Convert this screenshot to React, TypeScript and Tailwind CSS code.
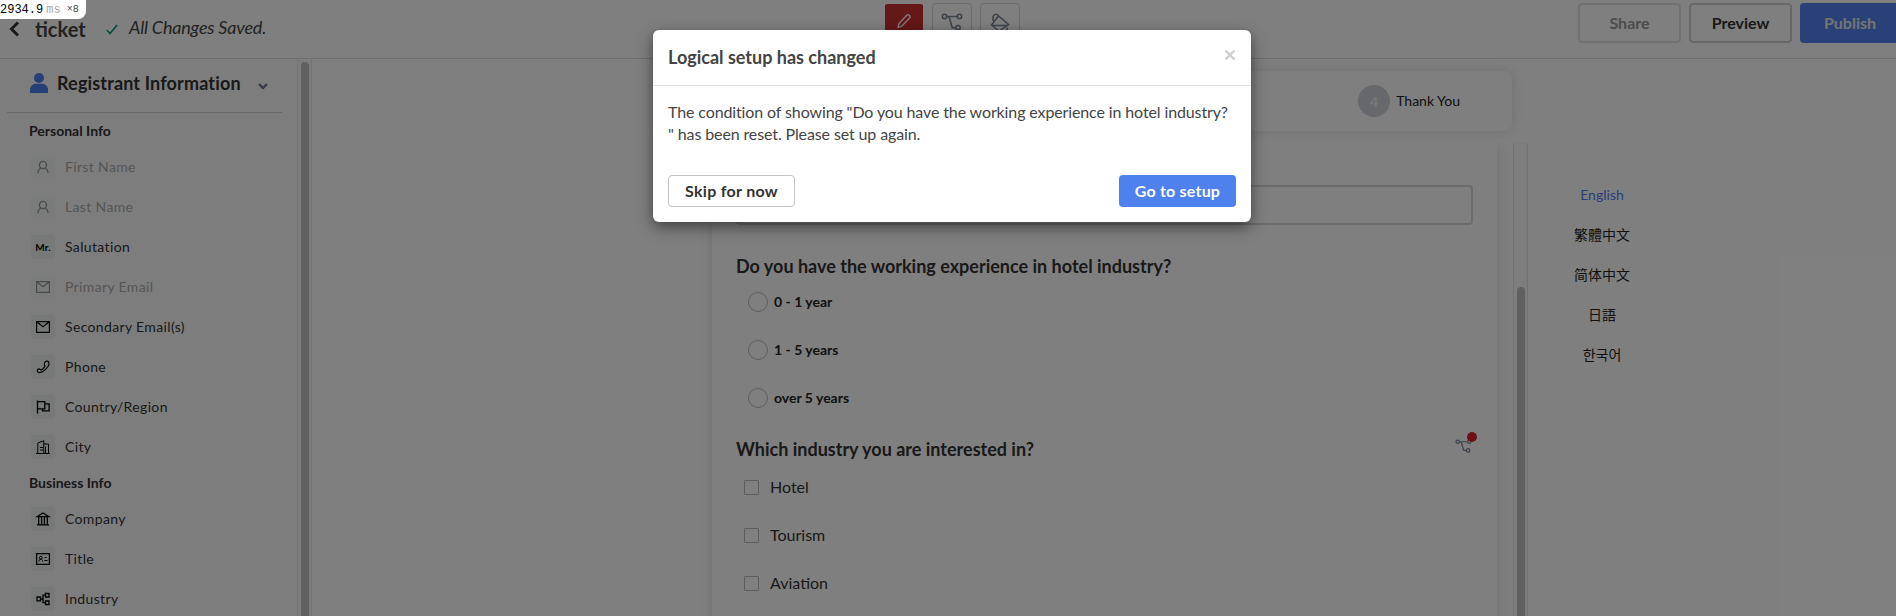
import type { ReactNode } from 'react';

const svgProps = { fill: 'none', stroke: 'currentColor', viewBox: '0 0 16 16', className: 'size-4' } as const;

const PersonIcon = () => (
  <svg {...svgProps} strokeWidth="1.3">
    <circle cx="8" cy="6" r="3.6" />
    <path d="M3 14c0-2.6 1.2-4.2 3-5M13 14c0-2.6-1.2-4.2-3-5" />
  </svg>
);
const MailIcon = () => (
  <svg {...svgProps} strokeWidth="1.2">
    <path d="M1.6 2.7h12.8v10.7H1.6zM2 3l6 4.8L14 3" />
  </svg>
);
const PhoneIcon = () => (
  <svg {...svgProps} strokeWidth="1.2">
    <path d="M10.6 2.4c1-.7 2.6-.4 3.1.6.6 1.4-.3 4.6-2.9 7.2s-5.6 3.8-7.3 3.2c-1.1-.5-1.5-1.9-.9-2.7.7-.7 1.8-.9 2.7-.3l.7.7c1.3-.4 3.6-2.7 4-4.1l-.6-.9c-.3-1 .1-2.6 1.2-3.7z" />
  </svg>
);
const FlagIcon = () => (
  <svg {...svgProps} strokeWidth="1.3">
    <path d="M2.5 1.5v13M2.5 2.6h7.3v7.2H2.5M9.8 4.8h4.3v7H7.5v-2" />
  </svg>
);
const CityIcon = () => (
  <svg {...svgProps} strokeWidth="1">
    <path d="M1 14.5h14M2.8 14V4l6-2.2V14M8.8 5h4.7v9M5 8.5h3M5 11h3M10.5 7.5V14" />
  </svg>
);
const BankIcon = () => (
  <svg {...svgProps} strokeWidth="1.3">
    <path d="M2 13.9h12M2 5.7h12L8 2zM3.7 6v8M6.6 6v8M9.4 6v8M12.3 6v8" />
  </svg>
);
const CardIcon = () => (
  <svg {...svgProps} strokeWidth="1.3">
    <path d="M1.6 2.6h12.8v10.8H1.6z" />
    <circle cx="5.8" cy="6.7" r="1.4" strokeWidth="1" />
    <path d="M3.8 10.5c.2-1.5.8-2.2 2-2.2s1.8.7 2 2.2M9.5 6.5h2M9.5 9.5h3" strokeWidth="1" />
  </svg>
);
const NodesIcon = () => (
  <svg {...svgProps} strokeWidth="1.3">
    <path d="M2 6h3.5v3.8H2zM10.5 2.5H14V6h-3.5zM10.5 10H14v3.5h-3.5zM5.5 8H8M10.5 4.2H8v7.5h2.5" />
  </svg>
);
const BranchIcon = ({ className }: { className: string }) => (
  <svg viewBox="0 0 22 18" fill="none" stroke="currentColor" strokeWidth="1.6" className={className}>
    <circle cx="3.5" cy="3.5" r="2.2" />
    <circle cx="18.5" cy="3.5" r="2.2" />
    <circle cx="17" cy="14.7" r="2.2" />
    <path d="M5.7 3.5h10.6M8 3.5l3.2 11.2h3.6" />
  </svg>
);

type Item = { label: string; icon: ReactNode; disabled?: boolean };

const personal: Item[] = [
  { label: 'First Name', icon: <PersonIcon />, disabled: true },
  { label: 'Last Name', icon: <PersonIcon />, disabled: true },
  { label: 'Salutation', icon: <span className="text-[10px] font-bold tracking-[0.2px]">Mr.</span> },
  { label: 'Primary Email', icon: <MailIcon />, disabled: true },
  { label: 'Secondary Email(s)', icon: <MailIcon /> },
  { label: 'Phone', icon: <PhoneIcon /> },
  { label: 'Country/Region', icon: <FlagIcon /> },
  { label: 'City', icon: <CityIcon /> },
];
const business: Item[] = [
  { label: 'Company', icon: <BankIcon /> },
  { label: 'Title', icon: <CardIcon /> },
  { label: 'Industry', icon: <NodesIcon /> },
];

function FieldList({ items }: { items: Item[] }) {
  return (
    <ul className="ml-[31px]">
      {items.map((it) => (
        <li key={it.label} className={`flex h-10 items-center gap-2.5 ${it.disabled ? 'opacity-40' : ''}`}>
          <span className="flex size-6 items-center justify-center rounded bg-[#eef2f2] text-black">{it.icon}</span>
          <span className="text-[14px] leading-5 tracking-[0.35px] text-[#333]">{it.label}</span>
        </li>
      ))}
    </ul>
  );
}

function Header() {
  return (
    <header className="flex h-[59px] shrink-0 items-start border-b border-[#dcdcdc] bg-white">
      <svg viewBox="0 0 12 16" className="mt-[21px] ml-2 h-4 w-3 shrink-0" fill="none" stroke="#333" strokeWidth="3">
        <path d="M10 1.5 3.5 8l6.5 6.5" />
      </svg>
      <h1 className="mt-[17px] ml-[15px] w-[71px] shrink-0 text-[20px] leading-6 font-bold text-[#444]">ticket</h1>
      <svg viewBox="0 0 12 11" className="mt-6 h-[11px] w-3 shrink-0" fill="none" stroke="#0a9b80" strokeWidth="1.8">
        <path d="M.8 6 4 9.5 11.2 1" />
      </svg>
      <span className="mt-[15px] ml-[11px] w-[756px] shrink-0 text-[18px] leading-6 tracking-[-0.2px] text-[#444] italic">
        All Changes Saved.
      </span>
      <div className="mt-[3px] flex shrink-0 gap-2">
        <span className="mt-px mr-px flex h-[38px] w-[38px] justify-center rounded-[2px] bg-[#c9302f] text-white">
          <svg viewBox="0 0 16 16" className="mt-[9px] size-4" fill="none" stroke="currentColor" strokeWidth="1.3">
            <path d="M2 14.5 3 10.5 11 2a1.3 1.3 0 0 1 1.8 0l1 1a1.3 1.3 0 0 1 0 1.8L6 13z" />
          </svg>
        </span>
        <span className="flex h-10 w-10 justify-center rounded border border-[#d6d6d6] text-[#7b8494]">
          <BranchIcon className="mt-[9px] h-[18px] w-[22px]" />
        </span>
        <span className="flex h-10 w-10 justify-center rounded border border-[#d6d6d6] text-[#7b8494]">
          <svg viewBox="0 0 20 20" className="mt-[9px] size-5" fill="none" stroke="currentColor" strokeWidth="1.5">
            <path d="M8 2.5 18.5 11.5 9 18 1.5 12 8.5 3M1.5 12.5H17M3 8V4.5C3 .5 8.500.5 8.500 3.500M17 14.500v3" />
          </svg>
        </span>
      </div>
      <div className="mt-[3px] -mr-6 ml-auto flex shrink-0 gap-2 text-[16px] font-bold">
        <button className="h-10 w-[103px] rounded border-2 border-[#e2e2e2] text-[#999]">Share</button>
        <button className="h-10 w-[103px] rounded border-2 border-[#d0d0d0] text-[#333]">Preview</button>
        <button className="h-10 w-[120px] rounded bg-[#5283ec] pr-5 text-[#e8e8e8]">Publish</button>
      </div>
    </header>
  );
}

function Sidebar() {
  return (
    <aside className="flex w-[312px] shrink-0 bg-[#fafafa]">
      <div className="w-[297px]">
        <div className="ml-[7px] flex h-[54px] w-[275px] items-center border-b border-[#cfcfcf] pb-[5px]">
          <svg viewBox="0 0 18 20" className="ml-[23px] h-5 w-[18px]" fill="#4f7ff0">
            <circle cx="9" cy="5" r="5" />
            <path d="M0 20v-3c0-4 3-6.200 6-6.200h6c3 0 6 2.200 6 6.200v3q0 .3-1 .3H1q-1 0-1-.3" />
          </svg>
          <span className="ml-[9px] text-[18px] leading-6 font-bold tracking-[0.15px] text-[#333]">Registrant Information</span>
          <svg viewBox="0 0 10 7" className="mt-[7px] mr-[14px] ml-auto h-[7px] w-[10px]" fill="none" stroke="#6d7788" strokeWidth="2.4">
            <path d="M1 1l4 4 4-4" />
          </svg>
        </div>
        <h2 className="ml-[29px] h-[34px] pt-[6px] text-[14px] leading-6 font-bold text-[#333]">Personal Info</h2>
        <FieldList items={personal} />
        <h2 className="ml-[29px] h-8 pt-[4px] text-[14px] leading-6 font-bold text-[#333]">Business Info</h2>
        <FieldList items={business} />
      </div>
      <div className="flex w-[15px] justify-center border-x border-[#e6e6e6] pt-[3px]">
        <div className="w-2 rounded-t bg-[#c1c1c1]" />
      </div>
    </aside>
  );
}

function Question({ title, children }: { title: string; children: ReactNode }) {
  return (
    <section>
      <h3 className="text-[18px] leading-6 font-bold text-[#333]">{title}</h3>
      {children}
    </section>
  );
}

function Canvas() {
  return (
    <main className="flex w-[1216px] shrink-0 flex-col">
      <div className="mt-3 ml-[384px] flex h-[60px] w-[816px] shrink-0 items-center justify-end rounded-lg bg-white pr-[52px] shadow-[0_0_14px_rgba(0,0,0,0.12)]">
        <span className="mr-[6px] flex size-8 items-center justify-center rounded-full bg-[#cdd0d6] text-[14px] font-bold text-[#f0f0f0]">4</span>
        <span className="text-[14px] leading-5 text-[#222]">Thank You</span>
      </div>
      <div className="mt-3 flex min-h-0 grow overflow-hidden">
        <div className="ml-[400px] h-[600px] w-[785px] shrink-0 bg-white px-6 shadow-[0_0_14px_rgba(0,0,0,0.12)]">
          <div className="mt-[42px] mb-[29px] h-10 w-[737px] rounded border-2 border-[#d6d6d6]" />
          <Question title="Do you have the working experience in hotel industry?">
            <div className="mb-[15px] ml-3">
              {['0 - 1 year', '1 - 5 years', 'over 5 years'].map((t) => (
                <label key={t} className="flex h-12 items-center gap-1.5 text-[14px] leading-5 font-bold text-[#222]">
                  <span className="size-5 rounded-full border border-[#bdbdbd]" />
                  {t}
                </label>
              ))}
            </div>
          </Question>
          <div className="flex">
            <Question title="Which industry you are interested in?">
              <div className="mt-[2px] ml-2">
                {['Hotel', 'Tourism', 'Aviation'].map((t) => (
                  <label key={t} className="flex h-12 items-center gap-[11px] text-[16px] leading-5 text-[#333]">
                    <span className="size-[15px] rounded-[1px] border border-[#b8b8b8]" />
                    {t}
                  </label>
                ))}
              </div>
            </Question>
            <span className="relative mt-[2px] mr-[1px] ml-auto text-[#7b8494]">
              <BranchIcon className="h-[14px] w-[17px]" />
              <span className="absolute -top-[7px] left-[12px] size-2.5 rounded-full bg-[#d8252c]" />
            </span>
          </div>
        </div>
        <div className="ml-auto flex w-[15px] justify-center border-x border-[#e6e6e6] bg-[#fafafa] pt-[144px]">
          <div className="w-2 rounded-t bg-[#c1c1c1]" />
        </div>
      </div>
    </main>
  );
}

function Modal() {
  return (
    <div className="absolute top-[30px] left-[653px] flex h-[192px] w-[598px] flex-col rounded-md bg-white shadow-[0_5px_15px_rgba(0,0,0,0.5)]">
      <div className="flex h-14 items-center justify-between border-b border-[#dfdfdf] px-[15px]">
        <h2 className="text-[18px] font-bold text-[#444]">Logical setup has changed</h2>
        <svg viewBox="0 0 12 12" className="mb-1.5 size-3" stroke="#ccc" strokeWidth="2.3">
          <path d="M1.5 1.5l9 9m0-9l-9 9" />
        </svg>
      </div>
      <p className="mt-[15px] ml-[15px] text-[16px] leading-[22px] tracking-[-0.12px] whitespace-nowrap text-[#444]">
        The condition of showing "Do you have the working experience in hotel industry?
        <br />" has been reset. Please set up again.
      </p>
      <div className="mt-auto mb-[15px] flex justify-between px-[15px] text-[16px] font-bold">
        <button className="h-8 w-[127px] rounded border border-[#c4c4c4] tracking-[0.3px] text-[#333]">Skip for now</button>
        <button className="h-8 w-[117px] rounded bg-[#4e80ee] tracking-[0.2px] text-white">Go to setup</button>
      </div>
    </div>
  );
}

export default function App() {
  return (
    <div className="relative flex h-[616px] w-[1896px] flex-col overflow-hidden bg-white font-['Lato','Noto_Sans_CJK_TC',sans-serif]">
      <Header />
      <div className="flex min-h-0 grow">
        <Sidebar />
        <Canvas />
        <nav className="mt-[116px] ml-[34px] flex w-20 flex-col items-center text-[14px] leading-10 text-[#222]">
          <span className="text-[#4f7ff0]">English</span>
          <span lang="zh-TW">繁體中文</span>
          <span lang="zh-CN" className="font-['Lato','Noto_Sans_CJK_SC',sans-serif]">简体中文</span>
          <span lang="ja" className="font-['Lato','Noto_Sans_CJK_JP',sans-serif]">日語</span>
          <span lang="ko" className="font-['Lato','Noto_Sans_CJK_KR',sans-serif]">한국어</span>
        </nav>
      </div>
      <div className="absolute inset-0 bg-black/50" />
      <Modal />
      <div className="absolute top-0 left-0 flex h-[19px] w-[86px] items-center rounded-br-lg bg-white font-['Liberation_Mono',monospace] text-[12px] text-black">
        2934.9
        <span className="ml-[3px] text-[#aaa]">ms</span>
        <span className="ml-[6px] text-[10px] text-[#444]">×8</span>
      </div>
    </div>
  );
}
